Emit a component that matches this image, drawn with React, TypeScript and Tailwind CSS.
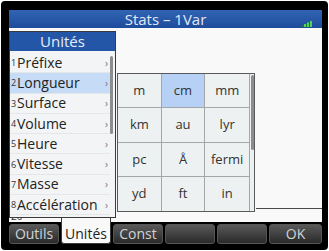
import React from 'react';

const menuItems = ['Préfixe', 'Longueur', 'Surface', 'Volume', 'Heure', 'Vitesse', 'Masse', 'Accélération'];
const units = ['m', 'cm', 'mm', 'km', 'au', 'lyr', 'pc', 'Å', 'fermi', 'yd', 'ft', 'in'];
const softKeys = ['Outils', 'Unités', 'Const', '', '', 'OK'];

const App = () => {
  return (
    <div className="w-[329px] h-[251px] bg-white p-[1px] font-['Open_Sans',sans-serif]">
      <div className="w-[327px] h-[249px] bg-black rounded-[4px] flex flex-col pt-[9px] pl-[8px] pr-[6px] pb-[6px]">
        {/* Title bar */}
        <div className="relative h-[18px] bg-gradient-to-b from-[#3164b4] to-[#1e4c9c] flex items-center justify-center">
          <span className="text-[15px] leading-none text-[#e1e9f6]">Stats – 1Var</span>
          <svg className="absolute right-[10px] top-[11px]" width="12" height="6" viewBox="0 0 12 6">
            <polygon points="0,6 12,6 12,0" fill="#1f7a2e" />
            <rect x="4" y="3" width="2" height="3" fill="#4fd35a" />
            <rect x="7" y="1.5" width="2" height="4.5" fill="#4fd35a" />
            <rect x="10" y="0" width="2" height="6" fill="#4fd35a" />
          </svg>
        </div>

        {/* Content */}
        <div className="relative h-[194px] bg-[#f9f9f9]">
          {/* bottom sliver of the list under the menu */}
          <div className="absolute left-[2px] top-[190px] h-[4px] overflow-hidden">
            <div className="-mt-[7px] text-[10px] leading-none text-[#333]">20</div>
          </div>
          <div className="absolute left-[247px] top-[180px] w-[66px] h-[1px] bg-[#4a4a4a]" />

          {/* Units menu */}
          <div className="absolute left-0 top-[3px] w-[107px] h-[187px] border border-[#3a3a3a] bg-[#f3f4f5] z-10 flex flex-col">
            <div className="h-[19px] bg-[#2456a8] flex items-center justify-center text-[15px] leading-none text-[#e6edf8]">
              Unités
            </div>
            <div className="flex flex-1 pt-[2px]">
              <div className="flex-1 flex flex-col">
                {menuItems.map((item, i) => (
                  <div
                    key={item}
                    className={`h-[20.3px] flex items-center border-b border-[#e4e6e8] ${i === 1 ? 'bg-[#c6dbf6]' : ''}`}
                  >
                    <span className="w-[7px] pl-[1px] text-[9px] leading-none text-[#333]">{i + 1}</span>
                    <span className="flex-1 text-[14px] leading-none text-[#222]">{item}</span>
                    <span className="pr-[2px] text-[10px] leading-none text-[#777]">›</span>
                  </div>
                ))}
              </div>
              <div className="w-[5px] pt-[3px]">
                <div className="w-[3px] h-[78px] rounded-[2px] bg-[#8d8d8d]" />
              </div>
            </div>
          </div>

          {/* Length submenu */}
          <div className="absolute left-[108px] top-[45px] w-[138px] h-[139px] border border-[#5a5a5a] bg-[#eef1f2] z-10 flex">
            <div className="flex-1 grid grid-cols-3">
              {units.map((u, i) => (
                <div
                  key={u}
                  className={`h-[34.25px] flex items-center justify-center text-[13px] leading-none text-[#333] ${
                    i % 3 !== 2 ? 'border-r border-[#a3a7a9]' : ''
                  } ${i < 9 ? 'border-b border-[#a3a7a9]' : ''} ${i === 1 ? 'bg-[#b6d0f6]' : ''}`}
                >
                  {u}
                </div>
              ))}
            </div>
            <div className="w-[5px] pt-[1px] border-l border-[#a3a7a9]">
              <div className="ml-[0.5px] w-[3px] h-[75px] rounded-[2px] bg-[#8d8d8d]" />
            </div>
          </div>
        </div>

        {/* Soft keys */}
        <div className="h-[22px] flex items-end gap-[2px]">
          {softKeys.map((k, i) =>
            k === 'Unités' ? (
              <div
                key={k}
                className="relative z-20 w-[50px] h-[26px] bg-[#f9f9f9] border-x border-b border-[#3a3a3a] rounded-b-[3px] flex items-end justify-center pb-[2px] text-[14px] leading-none text-[#222]"
              >
                {k}
              </div>
            ) : (
              <div
                key={i}
                className={`${i === 5 ? 'flex-1' : 'w-[50px]'} h-[20px] rounded-[3px] bg-gradient-to-b from-[#5a5a5a] to-[#2a2a2a] border border-[#555] flex items-center justify-center text-[14px] leading-none text-[#cfd3d6]`}
              >
                {k}
              </div>
            )
          )}
        </div>
      </div>
    </div>
  );
};

export default App;
